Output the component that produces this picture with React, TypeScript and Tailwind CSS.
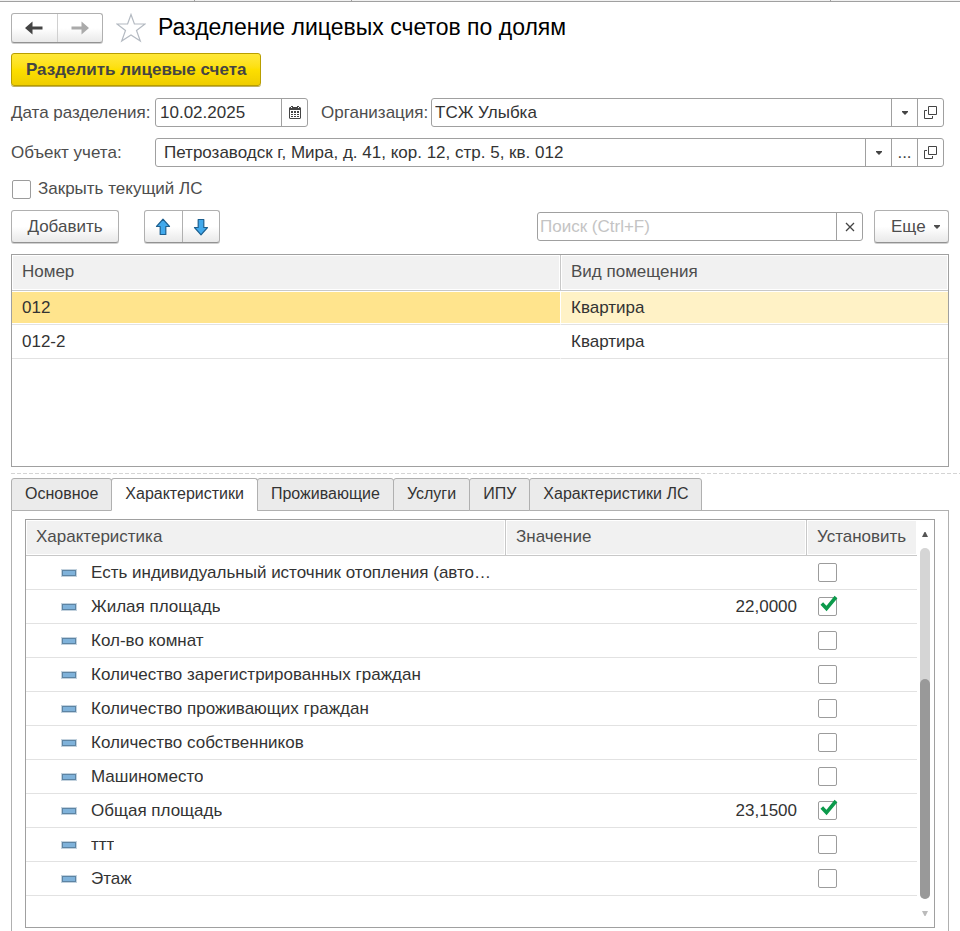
import { useState } from 'react';
import type { ReactNode } from 'react';

const accounts = [
  { number: '012', kind: 'Квартира' },
  { number: '012-2', kind: 'Квартира' },
];

const tabs = ['Основное', 'Характеристики', 'Проживающие', 'Услуги', 'ИПУ', 'Характеристики ЛС'];

const features = [
  { name: 'Есть индивидуальный источник отопления (авто…', value: '', set: false },
  { name: 'Жилая площадь', value: '22,0000', set: true },
  { name: 'Кол-во комнат', value: '', set: false },
  { name: 'Количество зарегистрированных граждан', value: '', set: false },
  { name: 'Количество проживающих граждан', value: '', set: false },
  { name: 'Количество собственников', value: '', set: false },
  { name: 'Машиноместо', value: '', set: false },
  { name: 'Общая площадь', value: '23,1500', set: true },
  { name: 'ттт', value: '', set: false },
  { name: 'Этаж', value: '', set: false },
];

const raised =
  'border border-[#b0b0b0] border-b-[#929292] rounded-[3px] bg-linear-to-b from-white from-50% to-[#e9e9e9] shadow-[0_1px_0_#d0d0d0]';
const field = 'flex h-[29px] border border-[#a0a0a0] rounded-[3px] bg-white';
const fieldInput = 'flex-1 min-w-0 bg-transparent text-[#333] outline-none';
const fieldButton = 'flex items-center justify-center w-[26px] shrink-0 border-l border-[#a0a0a0] text-[#444]';
const headCell = 'h-9 border-b border-[#c8c8c8] bg-[#f1f1f1] px-[10px] pb-[2px] text-left font-normal text-[#4d4d4d] shadow-[inset_0_0_0_1px_white]';

function Caret() {
  return (
    <svg width="6" height="4" viewBox="0 0 6 4" fill="currentColor" aria-hidden="true">
      <path d="M0 0h6v1L3 4 0 1z" />
    </svg>
  );
}

function OpenIcon() {
  return (
    <svg width="13" height="13" viewBox="0 0 13 13" fill="none" stroke="currentColor" aria-hidden="true">
      <path d="M4.500.5h8v8h-8z" />
      <path d="M3 4.500H.5v8h8V10" />
    </svg>
  );
}

function CalendarIcon() {
  return (
    <svg width="12" height="13" viewBox="0 0 12 13" aria-hidden="true">
      <path fill="#444" d="M1 1h1V0h2v1h4V0h2v1h1l1 1v10l-1 1H1l-1-1V2z" />
      <path fill="#fff" d="M1 4h10v8H1zM2 1h1v1H2zM9 1h1v1H9z" />
      <path fill="#444" d="M2 5h2v2H2zM5 5h2v2H5zM8 5h2v2H8zM2 8h2v1H2zM5 8h2v1H5zM8 8h2v1H8zM2 10h2v1H2zM5 10h2v1H5zM8 10h2v1H8z" />
    </svg>
  );
}

function NavArrow({ className }: { className: string }) {
  return (
    <svg className={className} width="18" height="14" viewBox="0 0 18 14" fill="currentColor" aria-hidden="true">
      <path d="M0 7l7.500-6.500v5H17.500v3H7.500v5z" />
    </svg>
  );
}

function MoveArrow({ className }: { className?: string }) {
  return (
    <svg className={className} width="16" height="18" viewBox="0 0 16 18" aria-hidden="true">
      <path d="M8 1.200L14.500 8.500H10.800V16.500H5.200V8.500H1.500z" fill="#41a9ec" stroke="#1c5f8f" strokeWidth="1.200" strokeLinejoin="round" />
    </svg>
  );
}

function Star() {
  return (
    <svg width="30" height="30" viewBox="0 0 30 30" fill="none" stroke="#b4bac2" strokeWidth="1.200" aria-hidden="true">
      <path d="M15 1.500l3.400 9.500H29l-8.500 6.500 3.800 10.500L15 22l-9.300 6 3.800-10.500L1 11h10.600z" />
    </svg>
  );
}

function Checkbox({ id, label, defaultChecked }: { id: string; label?: string; defaultChecked?: boolean }) {
  return (
    <span className="relative block size-[19px]">
      <input
        id={id}
        type="checkbox"
        aria-label={label}
        defaultChecked={defaultChecked}
        className="peer block size-[19px] appearance-none rounded-[2px] border border-[#9c9c9c] bg-white"
      />
      <svg
        className="pointer-events-none absolute left-[2px] -top-[2px] hidden peer-checked:block"
        width="18"
        height="17"
        viewBox="0 0 18 17"
        aria-hidden="true"
      >
        <path d="M1.800 8.600l4.700 5L16 2" fill="none" stroke="#0b9a4b" strokeWidth="3.600" />
      </svg>
    </span>
  );
}

function FieldButton({ label, children }: { label: string; children: ReactNode }) {
  return (
    <button type="button" aria-label={label} className={fieldButton}>
      {children}
    </button>
  );
}

export default function App() {
  const [activeTab, setActiveTab] = useState('Характеристики');
  const [selected, setSelected] = useState('012');

  return (
    <div className="bg-white font-['Liberation_Sans',Arial,sans-serif] text-[17px] leading-5 text-[#4d4d4d]">
      {/* Edge of the window tabs */}
      <div className="flex h-[2px] border-b border-[#a0a0a0] bg-[#f1f1f1]">
        <div className="w-[195px] border-r border-[#a0a0a0]" />
        <div className="w-[157px] border-r border-[#a0a0a0]" />
        <div className="w-[479px] border-r border-[#a0a0a0]" />
      </div>

      <header className="flex h-[51px] items-center pl-[11px]">
        <div className={`flex h-[30px] w-[92px] ${raised}`}>
          <button type="button" aria-label="Назад" className="flex flex-1 items-center justify-center border-r border-[#d0d0d0]">
            <NavArrow className="text-[#444]" />
          </button>
          <button type="button" aria-label="Вперед" className="flex flex-1 items-center justify-center">
            <NavArrow className="rotate-180 text-[#aaa]" />
          </button>
        </div>
        <button type="button" aria-label="В избранное" className="ml-[13px]">
          <Star />
        </button>
        <h1 className="ml-3 pb-[2px] text-[23px] text-black">Разделение лицевых счетов по долям</h1>
      </header>

      <form className="pl-[11px] pr-4">
        <button
          type="button"
          className="h-[33px] rounded-[3px] border border-[#b89e00] bg-linear-to-b from-[#ffe838] via-[#fddf00] to-[#efcd00] px-[14px] font-bold text-[#444] shadow-[0_1px_0_#c0b060]"
        >
          Разделить лицевые счета
        </button>

        <div className="mt-3 flex items-center">
          <label htmlFor="date" className="w-36 shrink-0">
            Дата разделения:
          </label>
          <div className={`${field} w-[153px] shrink-0`}>
            <input id="date" defaultValue="10.02.2025" className={`${fieldInput} pl-1`} />
            <FieldButton label="Выбрать дату">
              <CalendarIcon />
            </FieldButton>
          </div>
          <label htmlFor="org" className="ml-[13px] w-[110px] shrink-0">
            Организация:
          </label>
          <div className={`${field} flex-1`}>
            <input id="org" defaultValue="ТСЖ Улыбка" className={`${fieldInput} pl-[3px]`} />
            <FieldButton label="Список организаций">
              <Caret />
            </FieldButton>
            <FieldButton label="Открыть организацию">
              <OpenIcon />
            </FieldButton>
          </div>
        </div>

        <div className="mt-[11px] flex items-center">
          <label htmlFor="object" className="w-36 shrink-0">
            Объект учета:
          </label>
          <div className={`${field} flex-1`}>
            <input
              id="object"
              defaultValue="Петрозаводск г, Мира, д. 41, кор. 12, стр. 5, кв. 012"
              className={`${fieldInput} pl-2`}
            />
            <FieldButton label="Список объектов">
              <Caret />
            </FieldButton>
            <FieldButton label="Выбрать объект">...</FieldButton>
            <FieldButton label="Открыть объект">
              <OpenIcon />
            </FieldButton>
          </div>
        </div>

        <div className="mt-3 flex items-center gap-[7px] pl-px">
          <Checkbox id="close" />
          <label htmlFor="close">Закрыть текущий ЛС</label>
        </div>
      </form>

      <div className="mt-[11px] flex items-center px-[11px]">
        <button type="button" className={`h-[33px] w-[108px] ${raised}`}>
          Добавить
        </button>
        <div className={`ml-[25px] flex h-[33px] w-[76px] ${raised}`}>
          <button type="button" aria-label="Переместить вверх" className="flex flex-1 items-center justify-center border-r border-[#b0b0b0]">
            <MoveArrow />
          </button>
          <button type="button" aria-label="Переместить вниз" className="flex flex-1 items-center justify-center">
            <MoveArrow className="rotate-180" />
          </button>
        </div>
        <div className={`${field} ml-auto w-[326px]`}>
          <input
            aria-label="Поиск"
            placeholder="Поиск (Ctrl+F)"
            className={`${fieldInput} pl-[2px] placeholder:text-[#c4c4c4]`}
          />
          <FieldButton label="Очистить">
            <svg width="10" height="10" viewBox="0 0 10 10" stroke="currentColor" strokeWidth="1.300" aria-hidden="true">
              <path d="M1 1l8 8M9 1L1 9" />
            </svg>
          </FieldButton>
        </div>
        <button type="button" className={`ml-[11px] flex h-[33px] w-[75px] items-center justify-between pl-4 pr-2 ${raised}`}>
          Еще
          <Caret />
        </button>
      </div>

      {/* Accounts */}
      <div className="mx-[11px] mt-[11px] min-h-[213px] border border-[#a0a0a0]">
        <table className="w-full table-fixed border-separate border-spacing-0">
          <colgroup>
            <col />
            <col className="w-[387px]" />
          </colgroup>
          <thead>
            <tr>
              <th className={`${headCell} border-r`}>Номер</th>
              <th className={headCell}>Вид помещения</th>
            </tr>
          </thead>
          <tbody className="text-[#333]">
            {accounts.map((account) => {
              const active = account.number === selected;
              return (
                <tr key={account.number} onClick={() => setSelected(account.number)}>
                  <td
                    className={`h-[34px] border-b border-r border-b-[#e2e2e2] border-r-white px-[10px] py-0 shadow-[inset_0_1px_0_white,inset_0_-1px_0_white] ${active ? 'bg-[#ffe48d]' : ''}`}
                  >
                    {account.number}
                  </td>
                  <td
                    className={`h-[34px] border-b border-[#e2e2e2] px-[10px] py-0 shadow-[inset_0_1px_0_white,inset_0_-1px_0_white] ${active ? 'bg-[#fff2c6]' : ''}`}
                  >
                    {account.kind}
                  </td>
                </tr>
              );
            })}
          </tbody>
        </table>
      </div>

      <div className="ml-[11px] mt-[6px] h-px bg-[repeating-linear-gradient(90deg,#d4d4d4_0_4px,transparent_4px_6px)]" />

      {/* Tabs */}
      <div className="mx-[11px] mt-1 flex text-base leading-5" role="tablist">
        {tabs.map((tab) => (
          <button
            key={tab}
            type="button"
            role="tab"
            aria-selected={tab === activeTab}
            onClick={() => setActiveTab(tab)}
            className={`-mr-px h-[33px] shrink-0 rounded-t-[3px] border border-[#b0b0b0] px-[13px] pb-[2px] text-[#333] ${
              tab === activeTab ? 'border-b-white bg-white' : 'bg-[#ebebeb]'
            }`}
          >
            {tab}
          </button>
        ))}
        <div className="flex-1 border-b border-[#b0b0b0]" />
      </div>

      <div className="mx-[11px] border-x border-[#b0b0b0] px-[13px] pb-[3px] pt-2">
        <div className="flex border border-[#a0a0a0]">
          <div className="min-w-0 flex-1 pb-[31px]">
            <table className="w-full table-fixed border-separate border-spacing-0">
              <colgroup>
                <col />
                <col className="w-[301px]" />
                <col className="w-[110px]" />
              </colgroup>
              <thead>
                <tr>
                  <th className={`${headCell} border-r`}>Характеристика</th>
                  <th className={`${headCell} border-r`}>Значение</th>
                  <th className={headCell}>Установить</th>
                </tr>
              </thead>
              <tbody className="text-[#333]">
                {features.map((feature, i) => (
                  <tr key={feature.name}>
                    <td className="h-[34px] border-b border-[#e2e2e2] p-0 pl-9 pr-2">
                      <div className="flex items-center gap-[15px]">
                        <span className="h-[6px] w-[14px] shrink-0 border border-[#5d84a3] bg-[#7fb2da] outline outline-[#c3d2de]" />
                        <span className="truncate">{feature.name}</span>
                      </div>
                    </td>
                    <td className="h-[34px] border-b border-[#e2e2e2] px-[10px] py-0 text-right">{feature.value}</td>
                    <td className="h-[34px] border-b border-[#e2e2e2] px-[11px] py-0">
                      <Checkbox id={`set-${i}`} label={`Установить: ${feature.name}`} defaultChecked={feature.set} />
                    </td>
                  </tr>
                ))}
              </tbody>
            </table>
          </div>

          {/* Scroll bar */}
          <div className="flex w-[17px] shrink-0 flex-col items-center pr-px">
            <button type="button" aria-label="Прокрутить вверх" className="flex h-7 items-center justify-center text-[#555]">
              <svg width="6" height="5" viewBox="0 0 6 5" fill="currentColor" aria-hidden="true">
                <path d="M2.500 0h1L6 5H0z" />
              </svg>
            </button>
            <div className="flex w-[10px] flex-1 flex-col justify-end rounded-full bg-[#d5d5d5]">
              <div className="h-[220px] rounded-full bg-[#999]" />
            </div>
            <button type="button" aria-label="Прокрутить вниз" className="flex h-7 items-center justify-center text-[#bbb]">
              <svg width="6" height="5" viewBox="0 0 6 5" fill="currentColor" aria-hidden="true">
                <path d="M0 0h6L3.500 5h-1z" />
              </svg>
            </button>
          </div>
        </div>
      </div>
    </div>
  );
}
